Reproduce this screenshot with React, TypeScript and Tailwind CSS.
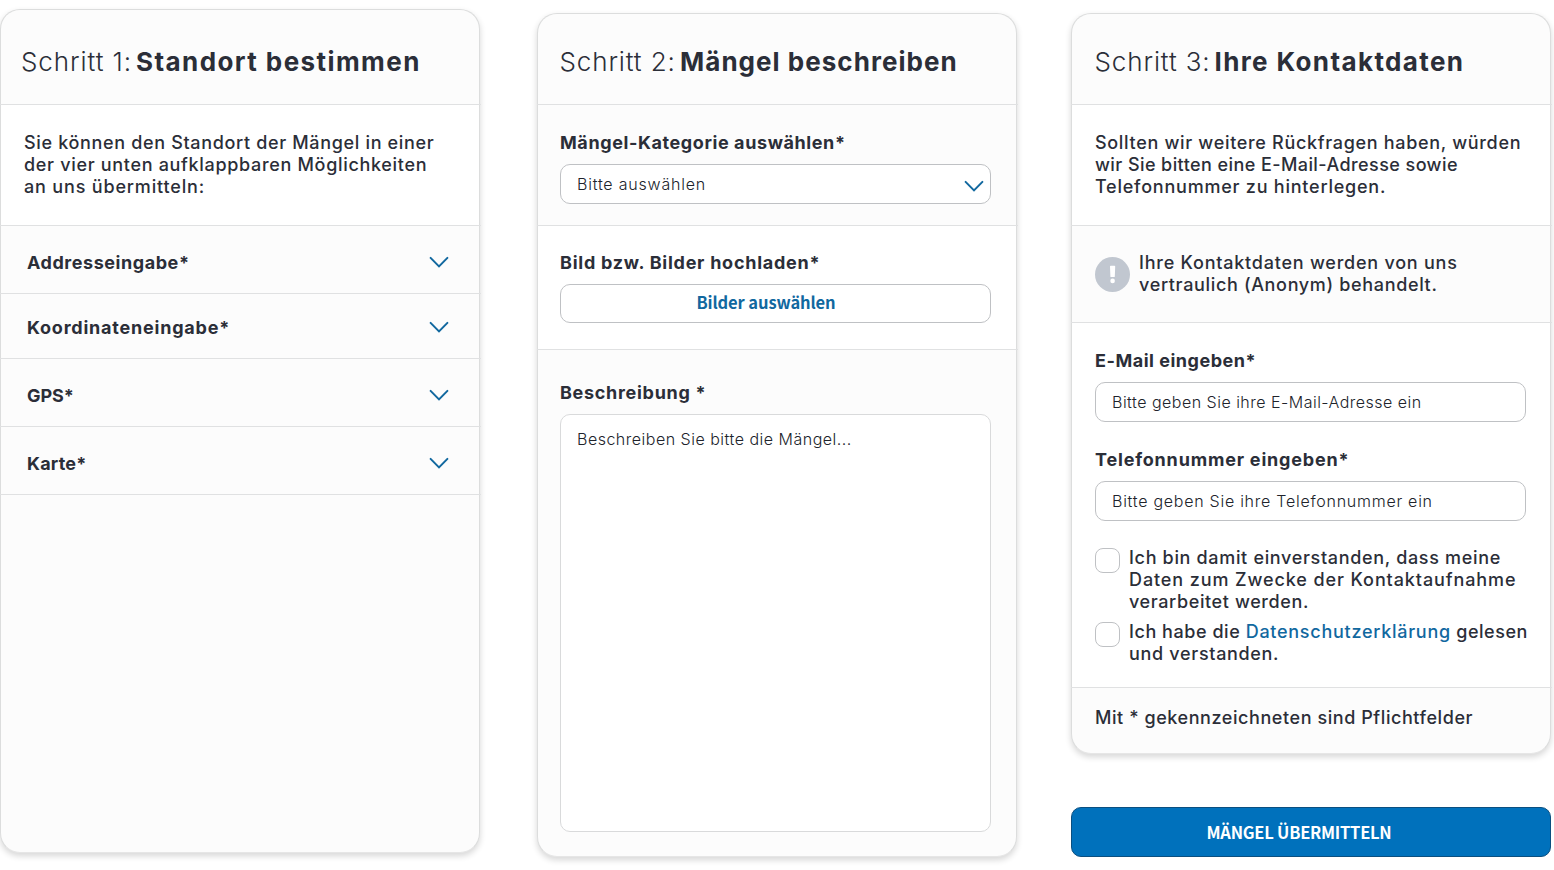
import type { ReactNode } from "react";

function Chevron({ className = "" }: { className?: string }) {
  return (
    <svg className={`h-[14px] w-5 shrink-0 ${className}`} viewBox="0 0 20 14" fill="none" stroke="#11689f" strokeWidth="2" strokeLinecap="round">
      <path d="M1.6 1.9 10 10.4l8.4-8.5" />
    </svg>
  );
}

function Divider() {
  return <div className="-ml-px -mr-[2px] h-px shrink-0 bg-[#e0e1e2]" />;
}

function Card({ className, children }: { className: string; children: ReactNode }) {
  return (
    <section className={`flex w-[480px] shrink-0 flex-col rounded-[20px] border border-[#dcdddd] border-b-[#e6e6e6] bg-[#fcfcfc] shadow-[0_3px_6px_rgba(0,0,0,0.16)] ${className}`}>
      {children}
    </section>
  );
}

function Title({ step, stepClass, text, textClass }: { step: string; stepClass: string; text: string; textClass: string }) {
  return (
    <h2 className="flex whitespace-nowrap text-[26px] leading-8">
      <span className={`font-light ${stepClass}`}>{step}</span>
      <span className={`font-bold ${textClass}`}>{text}</span>
    </h2>
  );
}

function Line({ className, children }: { className: string; children: ReactNode }) {
  return <span className={`block whitespace-nowrap ${className}`}>{children}</span>;
}

function Label({ className, children }: { className: string; children: ReactNode }) {
  return <div className={`whitespace-nowrap font-bold ${className}`}>{children}</div>;
}

function Field({ className, children }: { className: string; children: ReactNode }) {
  return (
    <div className={`mt-[10px] flex h-10 w-[431px] items-center justify-between rounded-[10px] border border-[#bfc1c4] bg-white pl-4 pr-[6px] text-base leading-5 font-light text-[#20232b] ${className}`}>
      {children}
    </div>
  );
}

function Checkbox() {
  return <div className="mt-px size-[25px] shrink-0 rounded-[8px] border border-[#bfc1c4] bg-white" />;
}

const locations = [
  { label: "Addresseingabe*", row: "h-[67px] pt-[26px]", tracking: "tracking-[0.55px]" },
  { label: "Koordinateneingabe*", row: "h-16 pt-[23px]", tracking: "tracking-[0.78px]" },
  { label: "GPS*", row: "h-[67px] pt-[26px]", tracking: "tracking-[-0.1px]" },
  { label: "Karte*", row: "h-[67px] pt-[26px]", tracking: "tracking-[0.2px]" },
];

export default function App() {
  return (
    <main className="flex h-[870px] w-[1554px] items-start overflow-hidden bg-white font-['Inter',sans-serif] text-lg leading-[22px] font-medium text-[#2b2e38]">
      <Card className="mt-[9px] h-[844px]">
        <div className="h-[94px] shrink-0 pl-5 pt-9">
          <Title step="Schritt 1:" stepClass="w-[115px] tracking-[0.92px]" text="Standort bestimmen" textClass="tracking-[1.42px]" />
        </div>
        <Divider />
        <p className="h-[120px] shrink-0 bg-white pl-[23px] pt-[27px]">
          <Line className="tracking-[0.66px]">Sie können den Standort der Mängel in einer</Line>
          <Line className="tracking-[0.68px]">der vier unten aufklappbaren Möglichkeiten</Line>
          <Line className="tracking-[0.83px]">an uns übermitteln:</Line>
        </p>
        <Divider />
        {locations.map(({ label, row, tracking }) => (
          <div key={label}>
            <div className={`flex items-start justify-between pl-[26px] pr-[30px] ${row}`}>
              <Label className={tracking}>{label}</Label>
              <Chevron className="mt-1" />
            </div>
            <Divider />
          </div>
        ))}
      </Card>

      <Card className="ml-[57px] mt-[13px] h-[844px]">
        <div className="h-[90px] shrink-0 pl-[21.5px] pt-8">
          <Title step="Schritt 2:" stepClass="w-[120.5px] tracking-[0.87px]" text="Mängel beschreiben" textClass="tracking-[1.03px]" />
        </div>
        <Divider />
        <div className="h-[120px] shrink-0 pl-[22px] pt-[27px]">
          <Label className="tracking-[0.59px]">Mängel-Kategorie auswählen*</Label>
          <Field className="tracking-[0.8px]">
            Bitte auswählen
            <Chevron className="mt-[5px]" />
          </Field>
        </div>
        <Divider />
        <div className="h-[123px] shrink-0 bg-white pl-[22px] pt-[26px]">
          <Label className="tracking-[0.74px]">Bild bzw. Bilder hochladen*</Label>
          <button className="mt-[10px] flex h-[39px] w-[431px] items-center justify-center rounded-[10px] border border-[#bfc1c4] bg-white pb-[3px] pr-[19px] font-['Noto_Sans_CJK_SC',sans-serif] text-[16.5px] leading-5 font-bold tracking-[-0.1px] text-[#11689f]">
            Bilder auswählen
          </button>
        </div>
        <Divider />
        <div className="pl-[22px] pt-8">
          <Label className="tracking-[0.7px]">Beschreibung *</Label>
          <div className="mt-[10px] h-[418px] w-[431px] rounded-[10px] border border-[#d9dadb] bg-white pl-4 pt-[14px] text-base leading-5 font-light tracking-[0.5px] text-[#20232b]">
            Beschreiben Sie bitte die Mängel...
          </div>
        </div>
      </Card>

      <div className="ml-[54px] mt-[13px] flex w-[480px] shrink-0 flex-col">
        <Card className="h-[741px]">
          <div className="h-[90px] shrink-0 pl-[22.5px] pt-8">
            <Title step="Schritt 3:" stepClass="w-[120px] tracking-[0.88px]" text="Ihre Kontaktdaten" textClass="tracking-[1.38px]" />
          </div>
          <Divider />
          <p className="h-[120px] shrink-0 bg-white pl-[23px] pt-[27px]">
            <Line className="tracking-[0.68px]">Sollten wir weitere Rückfragen haben, würden</Line>
            <Line className="tracking-[0.42px]">wir Sie bitten eine E-Mail-Adresse sowie</Line>
            <Line className="tracking-[0.77px]">Telefonnummer zu hinterlegen.</Line>
          </p>
          <Divider />
          <div className="flex h-24 shrink-0 gap-[9px] pl-[23px] pt-[26px]">
            <svg className="mt-[5px] size-[35px] shrink-0" viewBox="0 0 35 35">
              <circle cx="17.5" cy="17.5" r="17.5" fill="#c1c7d0" />
              <path d="M15 9.4q0-.7.7-.7h3.8q.7 0 .7.7l-.4 10q0 .7-.7.7h-3q-.7 0-.7-.7z" fill="#fff" />
              <circle cx="17.6" cy="23.9" r="2.3" fill="#fff" />
            </svg>
            <p>
              <Line className="tracking-[0.77px]">Ihre Kontaktdaten werden von uns</Line>
              <Line className="tracking-[0.66px]">vertraulich (Anonym) behandelt.</Line>
            </p>
          </div>
          <Divider />
          <div className="h-[364px] shrink-0 bg-white pl-[23px] pt-[27px]">
            <Label className="tracking-[0.52px]">E-Mail eingeben*</Label>
            <Field className="tracking-[0.49px]">Bitte geben Sie ihre E-Mail-Adresse ein</Field>
            <Label className="mt-[27px] tracking-[0.81px]">Telefonnummer eingeben*</Label>
            <Field className="tracking-[0.74px]">Bitte geben Sie ihre Telefonnummer ein</Field>
            <div className="mt-[26px] flex gap-[9px]">
              <Checkbox />
              <p>
                <Line className="tracking-[0.67px]">Ich bin damit einverstanden, dass meine</Line>
                <Line className="tracking-[0.9px]">Daten zum Zwecke der Kontaktaufnahme</Line>
                <Line className="tracking-[0.61px]">verarbeitet werden.</Line>
              </p>
            </div>
            <div className="mt-2 flex gap-[9px]">
              <Checkbox />
              <p>
                <Line className="tracking-[0.55px]">
                  Ich habe die <a className="tracking-[0.73px] text-[#11689f]">Datenschutzerklärung</a> gelesen
                </Line>
                <Line className="tracking-[0.68px]">und verstanden.</Line>
              </p>
            </div>
          </div>
          <Divider />
          <p className="pl-[23px] pt-[19px]">
            <Line className="tracking-[0.57px]">Mit * gekennzeichneten sind Pflichtfelder</Line>
          </p>
        </Card>
        <button className="mt-[53px] flex h-[50px] w-[480px] items-center justify-center rounded-[10px] border border-[#0b4f80] bg-[#0071bc] pr-6 font-['Noto_Sans_CJK_SC',sans-serif] text-[16.5px] leading-5 font-bold tracking-[-0.25px] text-white">
          MÄNGEL ÜBERMITTELN
        </button>
      </div>
    </main>
  );
}
